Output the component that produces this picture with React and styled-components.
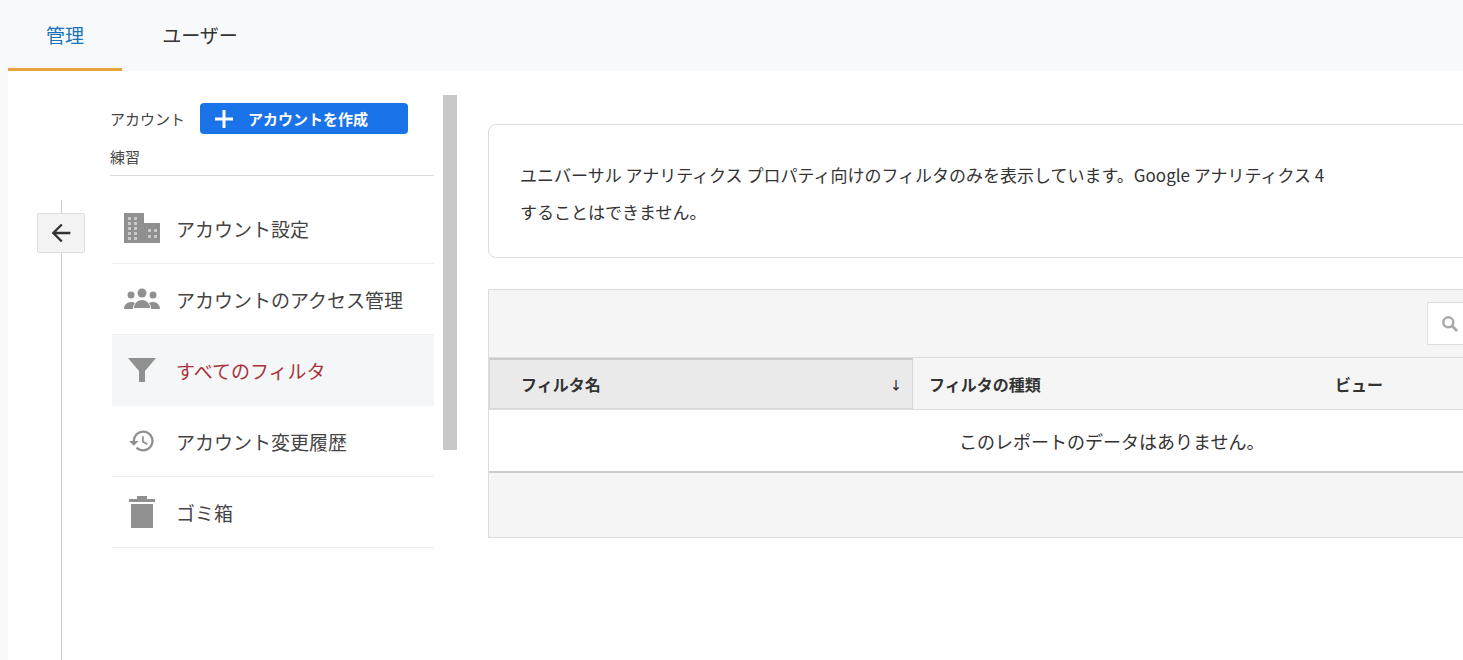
import React from "react";
import styled, { createGlobalStyle } from "styled-components";

const Global = createGlobalStyle`
  html, body { margin:0; padding:0; background:#f8f9fa; overflow:hidden; }
  body { font-family: "Noto Sans CJK JP", "Noto Sans", sans-serif; color:#333; }
`;
const Page = styled.div`width:1463px;height:660px;overflow:hidden;background:#f8f9fa;`;
const TopBar = styled.div`height:71px;display:flex;padding-left:8px;`;
const Tab = styled.div`
  width:${p=>p.w}px;height:71px;box-sizing:border-box;display:flex;align-items:center;justify-content:center;
  font-size:19px;color:${p=>p.active?"#1a73b8":"#333"};
  border-bottom:3px solid ${p=>p.active?"#e8a33d":"transparent"};
`;
const Body = styled.div`margin-left:8px;background:#fff;height:589px;display:flex;`;
const Rail = styled.div`width:102px;flex-shrink:0;position:relative;`;
const RailLine = styled.div`margin:129px 0 0 53px;width:1px;height:460px;background:#ccc;`;
const Back = styled.div`
  position:absolute;left:29px;top:142px;width:48px;height:40px;box-sizing:border-box;
  background:#f3f3f3;border:1px solid #ddd;border-radius:2px;display:flex;align-items:center;justify-content:center;
`;
const MenuCol = styled.div`width:324px;flex-shrink:0;padding-top:32px;`;
const AccRow = styled.div`display:flex;align-items:center;gap:15px;font-size:15px;color:#444;white-space:nowrap;`;
const CreateBtn = styled.div`
  width:208px;height:31px;border-radius:4px;background:#1a73e8;color:#fff;font-weight:700;font-size:15px;
  display:flex;align-items:center;gap:14px;padding-left:14px;box-sizing:border-box;flex-shrink:0;
`;
const AccName = styled.div`font-size:15px;color:#444;margin-top:12px;padding-bottom:8px;border-bottom:1px solid #dadce0;`;
const Items = styled.div`margin-top:17px;`;
const Item = styled.div`
  height:70px;display:flex;align-items:center;padding-left:12px;gap:16px;margin-left:2px;white-space:nowrap;
  border-bottom:1px solid ${p=>p.active?"transparent":"#eee"};
  background:${p=>p.active?"#f5f6f7":"transparent"};
  font-size:19px;color:${p=>p.active?"#a8323b":"#444"};
`;
const IconBox = styled.div`width:36px;display:flex;justify-content:center;`;
const ScrollCol = styled.div`width:54px;flex-shrink:0;padding-left:9px;padding-top:24px;box-sizing:border-box;`;
const Thumb = styled.div`width:14px;height:355px;background:#c8c8c8;`;
const Main = styled.div`width:1100px;flex-shrink:0;padding-top:53px;`;
const Notice = styled.div`
  border:1px solid #dadce0;border-radius:8px;height:134px;box-sizing:border-box;padding:31px 0 0 31px;
  font-size:17px;line-height:37px;color:#333;white-space:nowrap;overflow:hidden;
`;
const Panel = styled.div`margin-top:31px;background:#f5f5f5;border:1px solid #ddd;height:249px;box-sizing:border-box;`;
const SearchRow = styled.div`height:67px;display:flex;justify-content:flex-end;align-items:center;`;
const Search = styled.div`
  margin-right:-300px;width:460px;height:43px;box-sizing:border-box;background:#fff;border:1px solid #ddd;
  display:flex;align-items:center;gap:6px;padding-left:12px;font-size:18px;color:#666;
`;
const Header = styled.div`display:flex;height:51px;border-top:1px solid #ddd;`;
const HCell = styled.div`
  width:${p=>p.w}px;flex-shrink:0;box-sizing:border-box;display:flex;align-items:center;font-size:16px;font-weight:700;color:#333;
  padding-left:${p=>p.pl}px;padding-right:10px;
  ${p=>p.sorted&&"background:#eaeaea;border:1px solid #d8d8d8;border-top:2px solid #ccc;justify-content:space-between;"}
`;
const Empty = styled.div`
  height:61px;background:#fff;border-top:1px solid #ddd;border-bottom:2px solid #ccc;display:flex;align-items:center;
  padding-left:470px;font-size:18px;color:#333;
`;

const Building = () => (
  <svg width="36" height="30" viewBox="0 0 36 30"><path fill="#909090" d="M0 0h20v10h16v20H0z"/>
    {[4,10].map(x=>[4,9,14,19,24].map(y=><rect key={x+"-"+y} x={x} y={y} width="3" height="3" fill="#c8c8c8"/>))}
    {[24,30].map(x=>[16,22].map(y=><rect key={x+"."+y} x={x} y={y} width="3" height="3" fill="#c8c8c8"/>))}
  </svg>
);
const People = () => (
  <svg width="36" height="22" viewBox="0 0 36 22"><g fill="#909090">
    <circle cx="18" cy="5" r="4.5"/><circle cx="7" cy="7" r="3.5"/><circle cx="29" cy="7" r="3.5"/>
    <path d="M10 20c0-5 4-8 8-8s8 3 8 8z"/><path d="M0 21c0-4 3-7 7-7 2 0 3 .5 4 1-1.5 1.5-2 3.5-2 6zM36 21c0-4-3-7-7-7-2 0-3 .5-4 1 1.5 1.5 2 3.5 2 6z"/></g></svg>
);
const Filter = () => (<svg width="30" height="28" viewBox="0 0 30 28"><path fill="#909090" d="M1 2h28L18 15v11h-6V15z"/></svg>);
const History = () => (
  <svg width="30" height="28" viewBox="0 0 24 24"><path fill="#909090" d="M13 3a9 9 0 0 0-9 9H1l4 4 4-4H6a7 7 0 1 1 2.05 4.95l-1.420 1.42A9 9 0 1 0 13 3zm-1 5v5l4.25 2.52.77-1.28-3.52-2.09V8z"/></svg>
);
const Trash = () => (<svg width="30" height="34" viewBox="0 0 30 34"><path fill="#909090" d="M10 1h10v3h8v3H2V4h8zM4 9h22v24H4z"/></svg>);

const items = [
  {t:"アカウント設定",i:<Building/>},
  {t:"アカウントのアクセス管理",i:<People/>},
  {t:"すべてのフィルタ",i:<Filter/>,a:true},
  {t:"アカウント変更履歴",i:<History/>},
  {t:"ゴミ箱",i:<Trash/>},
];

export default function App(){
  return (<Page><Global/>
    <TopBar><Tab w={114} active>管理</Tab><Tab w={156}>ユーザー</Tab></TopBar>
    <Body>
      <Rail><RailLine/><Back><svg width="28" height="28" viewBox="0 0 24 24"><path fill="#333" d="M20 11H7.83l5.59-5.59L12 4l-8 8 8 8 1.41-1.41L7.83 13H20z"/></svg></Back></Rail>
      <MenuCol>
        <AccRow>アカウント<CreateBtn><svg width="20" height="20" viewBox="0 0 20 20"><path d="M10 1v18M1 10h18" stroke="#fff" strokeWidth="3"/></svg>アカウントを作成</CreateBtn></AccRow>
        <AccName>練習</AccName>
        <Items>{items.map(it=><Item key={it.t} active={it.a}><IconBox>{it.i}</IconBox>{it.t}</Item>)}</Items>
      </MenuCol>
      <ScrollCol><Thumb/></ScrollCol>
      <Main>
        <Notice>ユニバーサル アナリティクス プロパティ向けのフィルタのみを表示しています。Google アナリティクス 4<br/>することはできません。</Notice>
        <Panel>
          <SearchRow><Search><svg width="20" height="20" viewBox="0 0 24 24"><circle cx="10" cy="10" r="6" fill="none" stroke="#aaa" strokeWidth="3"/><path d="M14.5 14.5l6 6" stroke="#aaa" strokeWidth="3.5"/></svg>検索</Search></SearchRow>
          <Header>
            <HCell w={424} pl={31} sorted>フィルタ名<span style={{fontSize:12}}>↓</span></HCell>
            <HCell w={422} pl={16}>フィルタの種類</HCell>
            <HCell w={200} pl={0}>ビュー</HCell>
          </Header>
          <Empty>このレポートのデータはありません。</Empty>
        </Panel>
      </Main>
    </Body>
  </Page>);
}
